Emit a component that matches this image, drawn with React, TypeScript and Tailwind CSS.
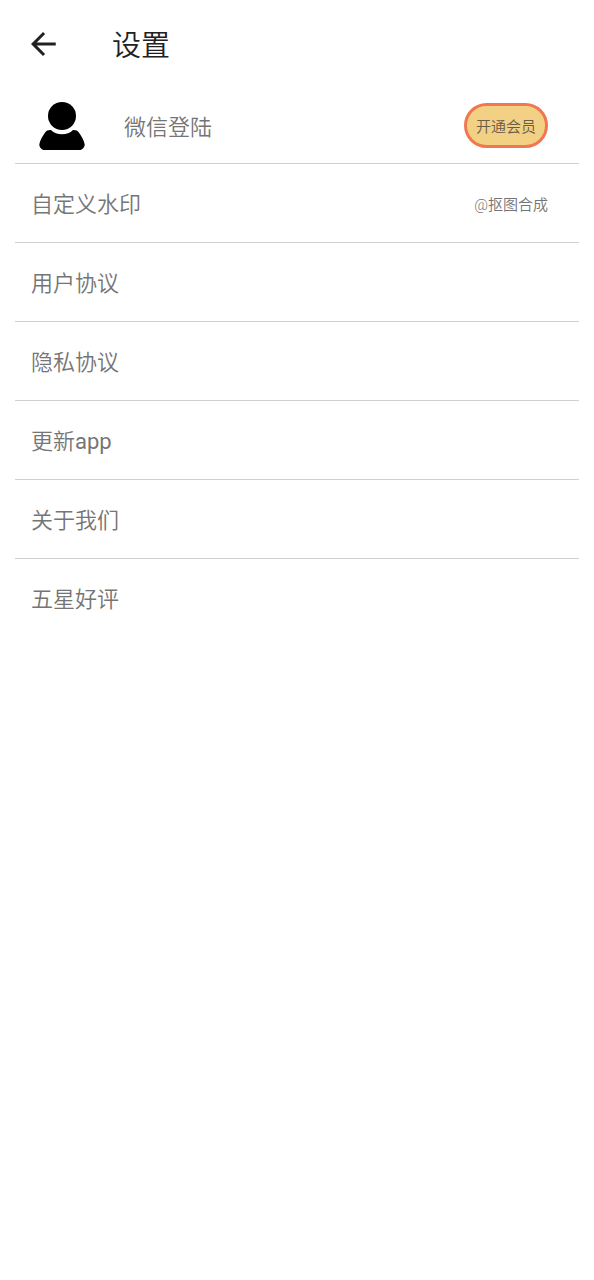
type MenuItem = {
  label: string;
  suffix?: string;
  value?: string;
};

const menuItems: MenuItem[] = [
  { label: "自定义水印", value: "@抠图合成" },
  { label: "用户协议" },
  { label: "隐私协议" },
  { label: "更新", suffix: "app" },
  { label: "关于我们" },
  { label: "五星好评" },
];

function BackIcon() {
  return (
    <svg aria-hidden="true" className="size-9" fill="#212121" viewBox="0 0 24 24">
      <path d="M20.500 11H7.83l5.59-5.59L12 4l-8 8 8 8 1.41-1.41L7.83 13H20.500v-2z" />
    </svg>
  );
}

function AvatarIcon() {
  return (
    <svg aria-hidden="true" className="h-12 w-[46px]" viewBox="0 0 46 48">
      <circle cx="23" cy="14" r="14" />
      <path d="M12 28c3 3 6.500 4.200 11 4.200S31 31 34 28c2.500-.2 4.500.5 5.700 2.200C42.500 34 45 38.500 45.600 42c.5 2.500-2 6-5 6H5.400c-3 0-5.500-3.500-5-6C1 38.500 3.500 34 6.300 30.200 7.500 28.500 9.500 27.800 12 28z" />
    </svg>
  );
}

function Header() {
  return (
    <header className="flex h-[88px] items-center gap-[51px] pl-[25px]">
      <button aria-label="返回" type="button">
        <BackIcon />
      </button>
      <h1 className="pt-1 text-[29px] leading-10 text-[#212121]">设置</h1>
    </header>
  );
}

function AccountRow() {
  return (
    <section className="flex h-[76px] items-center justify-between border-b border-[#d0d0d0] pr-[31px] pl-6">
      <button className="flex items-center gap-[39px]" type="button">
        <AvatarIcon />
        <span className="pt-1">微信登陆</span>
      </button>
      <button
        className="h-[45px] rounded-full border-3 border-[#ef7852] bg-[#f3d184] px-[9px] pt-0.5 text-[15px] text-[#6b5c48]"
        type="button"
      >
        开通会员
      </button>
    </section>
  );
}

export default function App() {
  return (
    <div className="min-h-screen bg-white font-[Roboto,'Noto_Sans_CJK_SC',sans-serif] font-[350] text-[#757575]">
      <Header />
      <main className="mx-[15px] text-[22px] leading-8">
        <AccountRow />
        <ul className="divide-y divide-[#d0d0d0]">
          {menuItems.map((item) => (
            <li key={item.label}>
              <button
                className="flex h-[78px] w-full items-center justify-between pt-1 pr-[31px] pl-4 text-left"
                type="button"
              >
                <span>
                  {item.label}
                  {item.suffix ? <span className="font-normal">{item.suffix}</span> : null}
                </span>
                {item.value ? <span className="text-[15px]">{item.value}</span> : null}
              </button>
            </li>
          ))}
        </ul>
      </main>
    </div>
  );
}
